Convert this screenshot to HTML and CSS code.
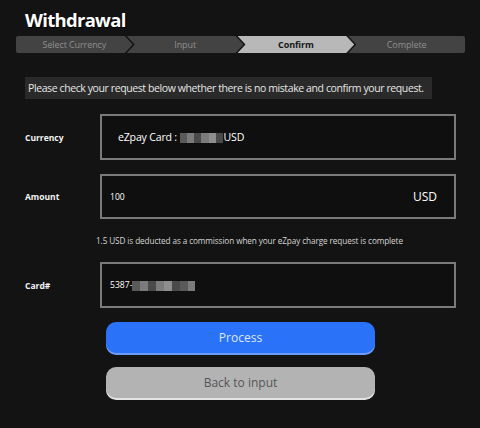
FILE: index.html
```html
<!DOCTYPE html>
<html lang="en">
<head>
  <meta charset="UTF-8">
  <meta name="viewport" content="width=device-width, initial-scale=1.0">
  <title>Withdrawal</title>
  <link rel="stylesheet" href="styles.css">
</head>
<body>
  <div class="page">
    <h1 class="title">Withdrawal</h1>

    <div class="steps">
      <div class="step first">Select Currency</div>
      <div class="step">Input</div>
      <div class="step active">Confirm</div>
      <div class="step last">Complete</div>
    </div>

    <p class="notice">Please check your request below whether there is no mistake and confirm your request.</p>

    <div class="form">
      <div class="row">
        <div class="label">Currency</div>
        <div class="field field-currency">
          eZpay Card :&nbsp;<span class="mosaic mosaic-short"><i></i><i></i><i></i><i></i><i></i><i></i></span>USD
        </div>
      </div>

      <div class="row">
        <div class="label">Amount</div>
        <div class="field field-amount">
          <span class="amount">100</span>
          <span class="unit">USD</span>
        </div>
      </div>

      <p class="note">1.5 USD is deducted as a commission when your eZpay charge request is complete</p>

      <div class="row">
        <div class="label">Card#</div>
        <div class="field field-card">
          5387-<span class="mosaic mosaic-long"><i></i><i></i><i></i><i></i><i></i><i></i><i></i><i></i></span>
        </div>
      </div>
    </div>

    <div class="actions">
      <button class="btn btn-process">Process</button>
      <button class="btn btn-back">Back to input</button>
    </div>
  </div>
</body>
</html>
```

FILE: styles.css
```css
body {
  margin: 0;
  background-color: #131313;
  color: #fff;
  font-family: "Open Sans", Arial, sans-serif;
}

.page {
  width: 480px;
  height: 428px;
  padding: 0 15px 0 16px;
  box-sizing: border-box;
}

.title {
  margin: 0;
  padding: 6px 0 0 9px;
  height: 30px;
  font-size: 18.5px;
  font-weight: bold;
  line-height: 28px;
  letter-spacing: -0.7px;
  text-shadow: 1px 1px 1px #000;
}

.steps {
  display: flex;
  height: 17px;
  width: 449px;
}

.step {
  flex: 1;
  background-color: #434343;
  color: #8f8f8f;
  font-size: 9px;
  line-height: 17px;
  letter-spacing: -0.1px;
  text-align: center;
  margin-left: -6px;
  clip-path: polygon(0 0, calc(100% - 8px) 0, 100% 50%, calc(100% - 8px) 100%, 0 100%, 8px 50%);
}

.step.first {
  margin-left: 0;
  border-radius: 2px 0 0 2px;
  clip-path: polygon(0 0, calc(100% - 8px) 0, 100% 50%, calc(100% - 8px) 100%, 0 100%);
}

.step.last {
  border-radius: 0 2px 2px 0;
  clip-path: polygon(0 0, 100% 0, 100% 100%, 0 100%, 8px 50%);
}

.step.active {
  background-color: #b8b8b8;
  color: #161616;
  font-weight: bold;
}

.notice {
  margin: 24px 0 0 9px;
  width: 407px;
  height: 22px;
  box-sizing: border-box;
  padding-left: 3px;
  background-color: #2a2a2a;
  color: #e6e6e6;
  font-size: 10.5px;
  letter-spacing: -0.4px;
  line-height: 22px;
  white-space: nowrap;
}

.form {
  margin-top: 15px;
  padding-left: 9px;
}

.row {
  display: flex;
  align-items: center;
  margin-bottom: 14px;
}

.label {
  width: 75px;
  font-size: 8.5px;
  font-weight: bold;
  color: #f2f2f2;
}

.field {
  display: flex;
  align-items: center;
  width: 356px;
  height: 46px;
  box-sizing: border-box;
  border: 2px solid #7a7a7a;
  background-color: #0f0f0f;
  padding-left: 8px;
  font-size: 8.6px;
}

.field-currency {
  padding-left: 16px;
  font-size: 10.6px;
  letter-spacing: -0.2px;
}

.field-amount {
  justify-content: space-between;
  padding-right: 17px;
  height: 45px;
}

.unit {
  font-size: 12px;
}

.mosaic {
  display: inline-flex;
  height: 10px;
  margin-top: 1px;
}

.mosaic i {
  display: block;
  width: 8px;
  height: 10px;
  background-color: #5a5a5a;
}

.mosaic i:nth-child(2n) {
  background-color: #7b7b7b;
}

.mosaic i:nth-child(3n) {
  background-color: #4a4a4a;
}

.mosaic i:nth-child(5n) {
  background-color: #8e8e8e;
}

.mosaic-short {
  width: 44px;
  overflow: hidden;
}

.mosaic-long {
  width: 63px;
  overflow: hidden;
}

.note {
  margin: 15px 0 14px 71px;
  font-size: 8.2px;
  letter-spacing: -0.1px;
  color: #d6d6d6;
  line-height: 14px;
}

.actions {
  display: flex;
  flex-direction: column;
  align-items: center;
  gap: 14px;
  margin-top: 14px;
}

.btn {
  width: 269px;
  height: 31px;
  border: none;
  border-radius: 10px;
  font-family: inherit;
  font-size: 12px;
  cursor: pointer;
}

.btn-process {
  background-color: #2a72f7;
  color: #dfe6f5;
  box-shadow: 0 2px 0 #6d9cf5;
}

.btn-back {
  background-color: #b3b3b3;
  color: #555;
  box-shadow: 0 2px 0 #e3e3e3;
}
```
